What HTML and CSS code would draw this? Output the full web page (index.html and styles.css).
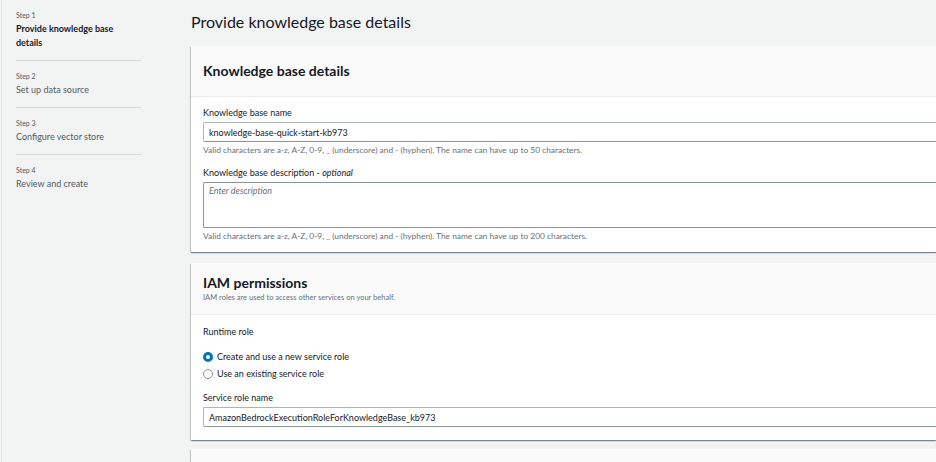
FILE: index.html
```html
<!DOCTYPE html>
<html lang="en">
<head>
<meta charset="utf-8">
<title>Provide knowledge base details</title>
<link rel="stylesheet" href="styles.css">
</head>
<body>
<div class="app">
  <nav class="sidebar">
    <ol class="steps">
      <li class="step">
        <span class="step-num">Step 1</span>
        <span class="step-title is-active">Provide knowledge base details</span>
      </li>
      <li class="step">
        <span class="step-num">Step 2</span>
        <span class="step-title">Set up data source</span>
      </li>
      <li class="step">
        <span class="step-num">Step 3</span>
        <span class="step-title">Configure vector store</span>
      </li>
      <li class="step">
        <span class="step-num">Step 4</span>
        <span class="step-title">Review and create</span>
      </li>
    </ol>
  </nav>

  <main class="main">
    <h1 class="page-title">Provide knowledge base details</h1>

    <section class="card">
      <header class="card-header">
        <h2 class="card-title">Knowledge base details</h2>
      </header>
      <div class="card-body card-body--first">
        <div class="field">
          <label class="field-label" for="kb-name">Knowledge base name</label>
          <input class="text-input" id="kb-name" type="text" value="knowledge-base-quick-start-kb973" readonly>
          <p class="hint">Valid characters are a-z, A-Z, 0-9, _ (underscore) and - (hyphen). The name can have up to 50 characters.</p>
        </div>
        <div class="field field--spaced">
          <label class="field-label" for="kb-desc">Knowledge base description - <em>optional</em></label>
          <textarea class="text-area" id="kb-desc" placeholder="Enter description"></textarea>
          <p class="hint">Valid characters are a-z, A-Z, 0-9, _ (underscore) and - (hyphen). The name can have up to 200 characters.</p>
        </div>
      </div>
    </section>

    <section class="card">
      <header class="card-header card-header--desc">
        <h2 class="card-title">IAM permissions</h2>
        <p class="card-desc">IAM roles are used to access other services on your behalf.</p>
      </header>
      <div class="card-body card-body--second">
        <div class="field">
          <span class="field-label">Runtime role</span>
          <div class="radio-group">
            <label class="radio">
              <span class="radio-dot is-checked"></span>
              <span class="radio-text">Create and use a new service role</span>
            </label>
            <label class="radio">
              <span class="radio-dot"></span>
              <span class="radio-text">Use an existing service role</span>
            </label>
          </div>
        </div>
        <div class="field field--after-radio">
          <label class="field-label" for="role-name">Service role name</label>
          <input class="text-input" id="role-name" type="text" value="AmazonBedrockExecutionRoleForKnowledgeBase_kb973" readonly>
        </div>
      </div>
    </section>

    <section class="card card--stub">
      <header class="card-header card-header--stub"></header>
    </section>
  </main>
</div>
</body>
</html>
```
FILE: styles.css
```css
* { box-sizing: border-box; }

html, body {
  margin: 0;
  height: 100%;
  overflow: hidden;
}

body {
  background: #f2f3f3;
  font-family: Lato, "Open Sans", sans-serif;
  color: #16191f;
}

.app {
  display: flex;
  align-items: flex-start;
  height: 100%;
}

/* Sidebar */
.sidebar {
  flex: 0 0 176px;
  margin-left: 1px;
  border-left: 1px solid #dfe3e4;
  height: 100%;
  padding-left: 14px;
}

.steps {
  list-style: none;
  margin: 0;
  padding: 0;
  width: 125px;
}

.step {
  display: flex;
  flex-direction: column;
  padding: 10px 0;
  border-bottom: 1px solid #d5dbdb;
}

.step:last-child { border-bottom: none; }

.step-num {
  font-size: 7px;
  line-height: 10px;
  color: #545b64;
}

.step-title {
  margin-top: 2px;
  font-size: 9px;
  line-height: 14px;
  color: #545b64;
}

.step-title.is-active {
  font-weight: 700;
  color: #16191f;
  width: 104px;
}

/* Main */
.main {
  flex: 1 1 auto;
  min-width: 0;
  padding-left: 14px;
}

.page-title {
  margin: 8px 0 10px;
  font-size: 16px;
  line-height: 28px;
  font-weight: 400;
  color: #16191f;
}

.card {
  background: #fff;
  box-shadow: 0 1px 1px 0 rgba(0, 28, 36, .3), 1px 1px 1px 0 rgba(0, 28, 36, .15), -1px 1px 1px 0 rgba(0, 28, 36, .15);
}

.card + .card { margin-top: 11px; }
.card--stub { margin-top: 9px; }
.card + .card--stub { margin-top: 9px; }

.card-header {
  background: #fafafa;
  border-bottom: 1px solid #eaeded;
  padding: 15px 12px;
}

.card-header--desc { padding: 10px 12px 11px; }

.card-header--stub {
  height: 13px;
  padding: 0;
  border-bottom: none;
}

.card-title {
  margin: 0;
  font-size: 14px;
  line-height: 20px;
  font-weight: 700;
}

.card-desc {
  margin: 0;
  font-size: 7.5px;
  line-height: 10px;
  color: #687078;
}

.card-body { padding: 9px 0 10px 12px; }
.card-body--second { padding: 10px 0 13px 12px; }

.field { display: flex; flex-direction: column; }
.field--spaced { margin-top: 10px; }
.field--after-radio { margin-top: 9px; }

.field-label {
  font-size: 9px;
  line-height: 13px;
  margin-bottom: 3px;
  color: #16191f;
}

.field-label em { font-style: italic; }

.text-input,
.text-area {
  display: block;
  width: 100%;
  margin: 0;
  border: 1px solid #aab7b8;
  border-right: 0;
  border-radius: 2px 0 0 2px;
  background: #fff;
  font-family: Lato, "Open Sans", sans-serif;
  font-size: 9px;
  color: #16191f;
  outline: none;
}

.text-input {
  height: 20px;
  padding: 0 5px;
  border-bottom-color: #879596;
}

.text-area {
  height: 46px;
  padding: 1px 5px;
  line-height: 13px;
  resize: none;
  border-color: #879596;
}

.text-area::placeholder {
  color: #687078;
  font-style: italic;
}

.hint {
  margin: 2px 0 0;
  font-size: 8.4px;
  line-height: 12px;
  color: #687078;
}

/* Radios */
.radio-group {
  display: flex;
  flex-direction: column;
  margin-top: 7px;
}

.radio {
  display: flex;
  align-items: center;
  height: 17px;
}

.radio-dot {
  flex: 0 0 10px;
  width: 10px;
  height: 10px;
  border-radius: 50%;
  border: 1px solid #879596;
  background: #fff;
  margin-right: 4px;
}

.radio-dot.is-checked {
  border: 3px solid #0073bb;
  background: #fff;
}

.radio-text {
  font-size: 9px;
  line-height: 13px;
  color: #16191f;
}
```
